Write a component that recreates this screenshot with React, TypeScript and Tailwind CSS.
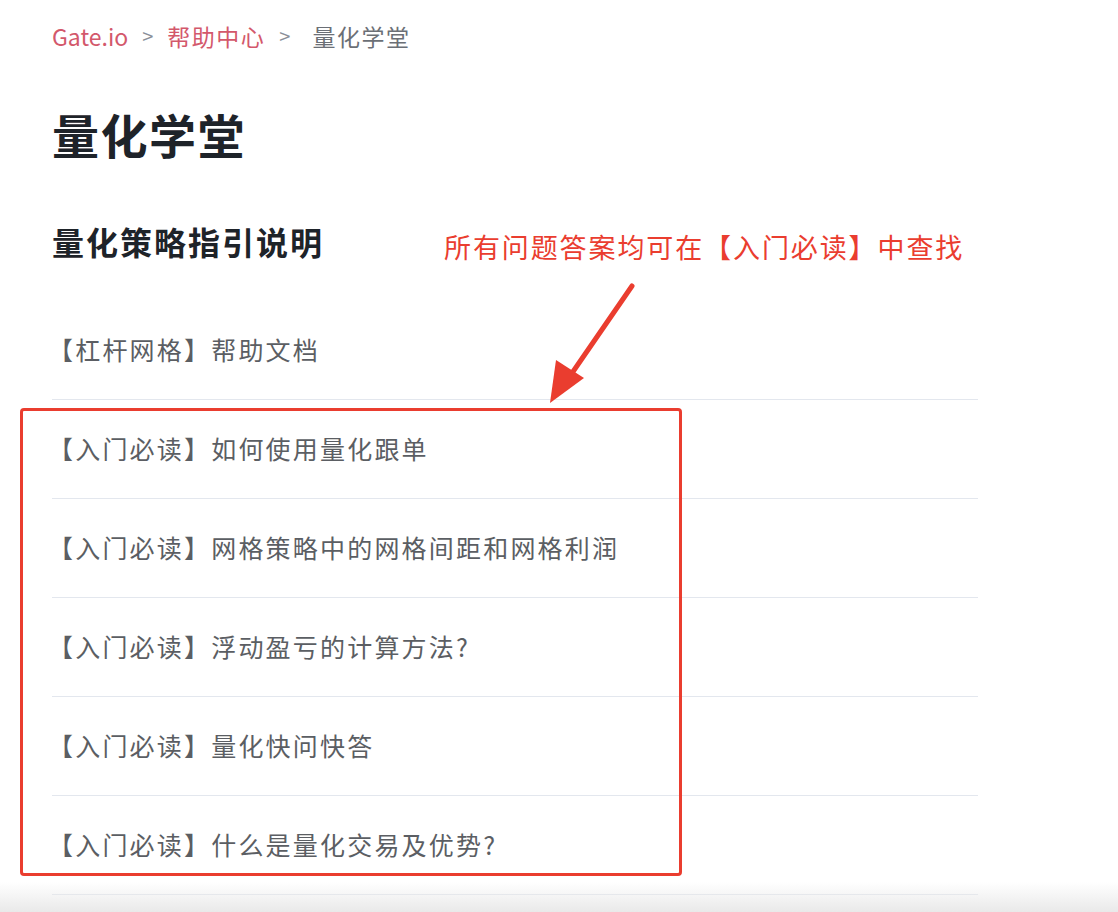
import React from 'react';

const items = [
    '【杠杆网格】帮助文档',
    '【入门必读】如何使用量化跟单',
    '【入门必读】网格策略中的网格间距和网格利润',
    '【入门必读】浮动盈亏的计算方法?',
    '【入门必读】量化快问快答',
    '【入门必读】什么是量化交易及优势?',
];

const font = { fontFamily: '"Noto Sans CJK SC", "Noto Sans", sans-serif' };

const App: React.FC = () => {
    return (
        <div className="relative w-[1118px] h-[912px] overflow-hidden bg-white" style={font}>
            <div className="pl-[52px] w-[978px]">
                <nav className="flex items-center h-[70px] pt-[2px] text-[23px] text-[#d3586b]">
                    <span>Gate.io</span>
                    <span className="mx-[14px] text-[#8a8f99] text-[20px]">&gt;</span>
                    <span className="tracking-[1.5px]">帮助中心</span>
                    <span className="mx-[14px] text-[#8a8f99] text-[20px]">&gt;</span>
                    <span className="ml-[8px] tracking-[1.5px] text-[#6b6f76]">量化学堂</span>
                </nav>
                <h1 className="mt-[30px] text-[47px] leading-[68px] font-bold tracking-[1.5px] text-[#1e2329]">量化学堂</h1>
                <h2 className="mt-[48px] text-[32px] leading-[50px] font-bold tracking-[2px] text-[#1e2329]">量化策略指引说明</h2>
                <ul className="mt-[35px]">
                    {items.map((item) => (
                        <li
                            key={item}
                            className="h-[99px] flex items-center border-b border-[#e3e7ee] text-[25px] tracking-[2.2px] text-[#5b5e63]"
                        >
                            <span className="-ml-[4px]">{item}</span>
                        </li>
                    ))}
                </ul>
            </div>

            {/* annotation */}
            <div className="absolute left-[444px] top-[227px] text-[27px] leading-[40px] tracking-[1.9px] text-[#ea3d2f]">
                所有问题答案均可在【入门必读】中查找
            </div>
            <svg className="absolute left-[540px] top-[280px]" width="100" height="130" viewBox="0 0 100 130">
                <line x1="92" y1="6" x2="30" y2="96" stroke="#ea3d2f" strokeWidth="5" strokeLinecap="round" />
                <polygon points="10,123 16,80 44,98" fill="#ea3d2f" />
            </svg>
            <div className="absolute left-[20px] top-[408px] w-[662px] h-[468px] border-[3px] border-[#ea3d2f] rounded-[4px]" />

            <div className="absolute left-0 right-0 bottom-0 h-[30px] bg-gradient-to-b from-white/0 to-[#e9e9e9]" />
        </div>
    );
};

export default App;
